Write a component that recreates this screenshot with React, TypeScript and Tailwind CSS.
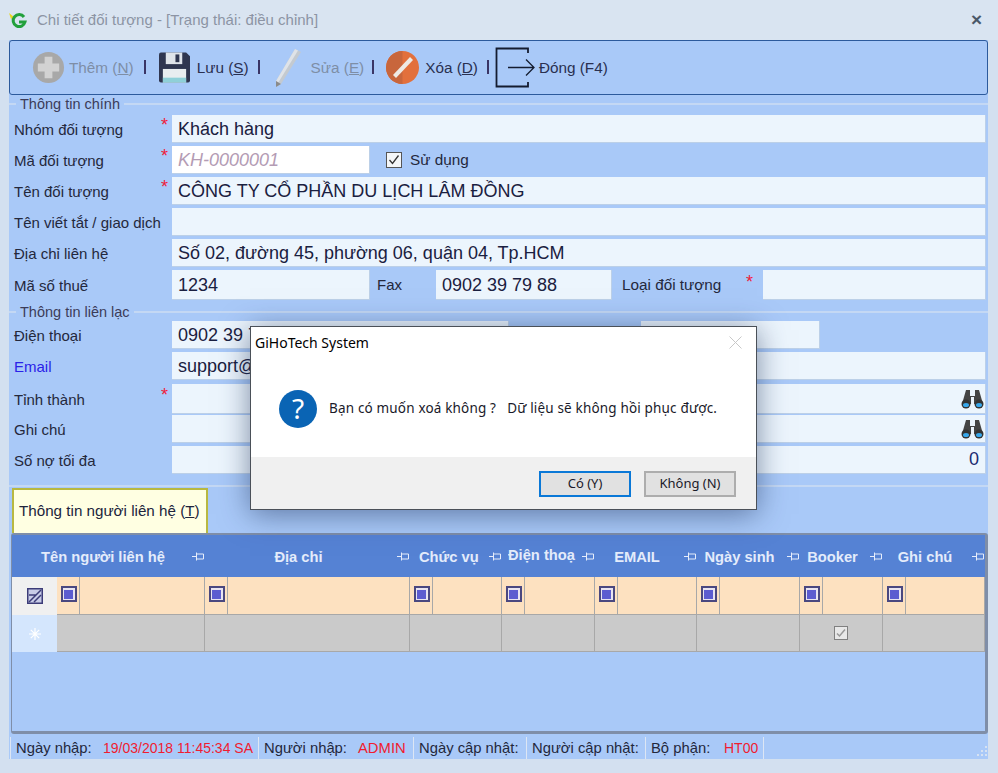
import React from "react";

const SANS = "font-['Liberation_Sans',Arial,sans-serif]";

function Star() {
  return <span className="text-[18px] leading-none text-[#f0203a] h-[14px] font-['Liberation_Sans',sans-serif]">*</span>;
}

function Label({ text, star, blue }: { text: string; star?: boolean; blue?: boolean }) {
  return (
    <div className="w-[163px] shrink-0 pl-[5px] pr-[4px] pt-[2px] flex justify-between items-center">
      <span className={`text-[15px] whitespace-nowrap ${blue ? "text-[#2a22e8]" : "text-[#24283c]"}`}>{text}</span>
      {star && <span className="-mt-[8px]"><Star /></span>}
    </div>
  );
}

function Input({ value, className = "", right, italic, white }: { value?: string; className?: string; right?: React.ReactNode; italic?: boolean; white?: boolean }) {
  return (
    <div className={`h-full flex items-center pl-[6px] pr-[1px] border-b border-r border-[#bcd0e8] ${white ? "bg-white" : "bg-[#ecf5fd]"} ${className}`}>
      <span className={`flex-1 pt-[1px] whitespace-nowrap overflow-hidden text-[18px] ${italic ? "italic text-[#b49cb4]" : "text-[#1a2040]"}`}>{value}</span>
      {right}
    </div>
  );
}

function Section({ title }: { title: string }) {
  return (
    <div className="h-[14px] flex items-center">
      <div className="w-[7px] h-[2px] bg-[#c4d8f4]" />
      <span className="px-[4px] text-[14.500px] leading-none text-[#3c3c58]">{title}</span>
      <div className="flex-1 h-[2px] bg-[#c4d8f4]" />
    </div>
  );
}

function Binoculars() {
  return (
    <svg width="23" height="22" viewBox="0 0 23 22" className="shrink-0">
      <path d="M5 2h4v6h5V2h4l4 14H13V9h-3v7H1z" fill="#444" />
      <circle cx="5" cy="16" r="4.500" fill="#333" />
      <circle cx="18" cy="16" r="4.500" fill="#333" />
      <ellipse cx="5" cy="17" rx="3" ry="2" fill="#38a8ec" />
      <ellipse cx="18" cy="17" rx="3" ry="2" fill="#38a8ec" />
    </svg>
  );
}

function Sep({ className }: { className: string }) {
  return <span className={`w-[2px] h-[14px] bg-[#3a3566] -mt-[1px] shrink-0 ${className}`} />;
}

function ToolButton({ icon, label, u, dim, gap }: { icon: React.ReactNode; label: string; u: string; dim?: boolean; gap: string }) {
  return (
    <div className="flex items-center">
      {icon}
      <span className={`text-[15.300px] pt-[1px] whitespace-nowrap ${gap} ${dim ? "text-[#7e8ea6]" : "text-[#2a3050]"}`}>
        {label} (<span className="underline">{u}</span>)
      </span>
    </div>
  );
}

const COLS = "grid grid-cols-[148px_205px_92px_93px_102px_103px_83px_102px]";

function Pin() {
  return (
    <svg width="12" height="9" viewBox="0 0 12 9" className="shrink-0">
      <path d="M0 4.500h4M4.500 0.500v8M4.500 2h7M4.500 7h7M11.500 2v5" stroke="#e6edfb" strokeWidth="1" fill="none" />
    </svg>
  );
}

function HeadCell({ text, className = "", pad }: { text: string; className?: string; pad?: string }) {
  return (
    <div className={`flex items-center h-full pr-[1px] overflow-hidden ${className}`}>
      <span className={`flex-1 pt-[2px] mr-[5px] whitespace-nowrap text-[14.700px] font-bold text-[#e4ecfb] ${pad ?? "text-center"}`}>{text}</span>
      <Pin />
    </div>
  );
}

function Filter() {
  return (
    <div className="h-full flex border-r border-b border-[#a8a8a8] bg-[#fde1c0]">
      <div className="w-[23px] shrink-0 border-r border-[#a8a8a8] flex items-center justify-center pl-[1px] pb-[3px]">
        <div className="w-[16px] h-[16px] border-2 border-[#4a4880] bg-[#e8e4f0] flex items-center justify-center">
          <div className="w-[9px] h-[9px] bg-[#5c5cd0]" />
        </div>
      </div>
    </div>
  );
}

function StatusSep() {
  return <span className="w-px h-[22px] bg-[#dde6f4] shrink-0" />;
}

const CELLS = [0, 1, 2, 3, 4, 5, 6, 7];
const HEADS = ["Địa chỉ", "Chức vụ", "Điện thoại", "EMAIL", "Ngày sinh", "Booker", "Ghi chú"];

export default function App() {
  return (
    <div className={`relative w-[998px] h-[773px] overflow-hidden bg-[#d3e0f0] ${SANS}`}>
      {/* title bar */}
      <div className="h-[40px] flex items-center pl-[8px] pr-[16px] bg-[#d9e4f1]">
        <svg width="20" height="20" viewBox="0 0 20 20">
          <path d="M1 3l5 4-3 2z" fill="#e8d820" />
          <path d="M16 7a6 6 0 1 0 1 5h-6" stroke="#22a03c" strokeWidth="3" fill="none" />
        </svg>
        <span className="ml-[9px] flex-1 text-[15px] text-[#8c94a4]">Chi tiết đối tượng - [Trạng thái: điều chỉnh]</span>
        <span className="text-[19px] font-bold text-[#4a5868]">×</span>
      </div>

      <div className="mx-[9px] w-[979px] h-[719px] bg-[#a9c9f8] flex flex-col">
        {/* toolbar */}
        <div className="h-[55px] shrink-0 border border-[#2c5a9c] rounded-[3px] flex items-center pl-[22px]">
          <ToolButton
            dim label="Thêm" u="N" gap="ml-[4px]"
            icon={
              <svg width="33" height="33" viewBox="0 0 34 34">
                <circle cx="17" cy="17" r="16" fill="#a8a8a8" />
                <path d="M13 6h8v7h7v8h-7v7h-8v-7H6v-8h7z" fill="#d2d2d2" />
              </svg>
            }
          />
          <Sep className="ml-[10px] mr-[13px]" />
          <ToolButton
            label="Lưu" u="S" gap="ml-[7px]"
            icon={
              <svg width="31" height="31" viewBox="0 0 32 31">
                <path d="M0 2a2 2 0 0 1 2-2h26l4 4v25a2 2 0 0 1-2 2H2a2 2 0 0 1-2-2z" fill="#2f3650" />
                <rect x="7" y="0" width="17" height="12" fill="#dfe4ea" />
                <rect x="17" y="2" width="4" height="8" fill="#2f3650" />
                <rect x="4" y="17" width="24" height="14" fill="#e8edf0" />
                <rect x="4" y="26" width="24" height="5" fill="#8fd0d8" />
              </svg>
            }
          />
          <Sep className="ml-[9px] mr-[13px]" />
          <ToolButton
            dim label="Sửa" u="E" gap="ml-[8px]"
            icon={
              <svg width="30" height="40" viewBox="0 0 30 40">
                <path d="M22 1l6 3L8 36l-5 3 0-6z" fill="#c4cad0" />
                <path d="M22 1l3 1.500L5 35l-2-2z" fill="#dfe3e8" />
                <path d="M3 33l5 3-5 3z" fill="#8a8a8a" />
              </svg>
            }
          />
          <Sep className="ml-[8px] mr-[12px]" />
          <ToolButton
            label="Xóa" u="D" gap="ml-[6px]"
            icon={
              <svg width="33" height="33" viewBox="0 0 33 33">
                <circle cx="16.500" cy="16.500" r="16.500" fill="#e2703c" />
                <path d="M16.500 0a16.500 16.500 0 0 0 0 33z" fill="#c8663c" />
                <path d="M7 24L24 6l3 3L10 27z" fill="#eeeae4" />
              </svg>
            }
          />
          <Sep className="ml-[9px] mr-[6px]" />
          <div className="flex items-center">
            <svg width="40" height="41" viewBox="0 0 40 41" className="shrink-0">
              <path d="M33 6V1.500H1.500v38H33V35" stroke="#141c30" strokeWidth="1.800" fill="none" />
              <path d="M13 20.500h26M31 12.500l8 8-8 8" stroke="#141c30" strokeWidth="1.300" fill="none" />
            </svg>
            <span className="ml-[4px] pt-[1px] text-[15.300px] text-[#2a3050] whitespace-nowrap">Đóng (F4)</span>
          </div>
        </div>

        {/* Main information */}
        <div className="mt-[2px]"><Section title="Thông tin chính" /></div>
        <div className="mt-[4px] flex flex-col gap-[3px] pr-[2px]">
          <div className="h-[28px] flex"><Label text="Nhóm đối tượng" star /><Input value="Khách hàng" className="flex-1" /></div>
          <div className="h-[28px] flex items-center">
            <Label text="Mã đối tượng" star />
            <Input value="KH-0000001" italic white className="w-[198px]" />
            <div className="ml-[16px] w-[16px] h-[16px] bg-[#f4f6f8] border border-[#555] flex items-center justify-center">
              <svg width="12" height="12" viewBox="0 0 12 12"><path d="M1.500 6l3 3.500 6-8" stroke="#333" strokeWidth="1.300" fill="none" /></svg>
            </div>
            <span className="ml-[8px] pt-[1px] text-[15.300px] text-[#24283c]">Sử dụng</span>
          </div>
          <div className="h-[28px] flex"><Label text="Tên đối tượng" star /><Input value="CÔNG TY CỔ PHẦN DU LỊCH LÂM ĐỒNG" className="flex-1" /></div>
          <div className="h-[28px] flex"><Label text="Tên viết tắt / giao dịch" /><Input className="flex-1" /></div>
          <div className="h-[28px] flex"><Label text="Địa chỉ liên hệ" /><Input value="Số 02, đường 45, phường 06, quận 04, Tp.HCM" className="flex-1" /></div>
          <div className="h-[30px] flex items-center">
            <Label text="Mã số thuế" />
            <Input value="1234" className="w-[198px]" />
            <span className="w-[66px] shrink-0 pl-[7px] pt-[1px] text-[15px] text-[#24283c]">Fax</span>
            <Input value="0902 39 79 88" className="w-[176px]" />
            <span className="w-[151px] shrink-0 pl-[10px] pt-[1px] flex justify-between pr-[10px] text-[15.300px] text-[#24283c]">Loại đối tượng <span className="-mt-[2px]"><Star /></span></span>
            <Input className="flex-1" />
          </div>
        </div>

        {/* Contact info */}
        <div className="mt-[5px]"><Section title="Thông tin liên lạc" /></div>
        <div className="mt-[2px] flex flex-col pr-[2px]">
          <div className="h-[28px] flex">
            <Label text="Điện thoại" />
            <Input value="0902 39 79 88" className="w-[337px]" />
            <div className="w-[132px] shrink-0" />
            <Input className="w-[179px]" />
          </div>
          <div className="h-[28px] mt-[3px] flex"><Label text="Email" blue /><Input value="support@gihotech.com" className="flex-1" /></div>
          <div className="h-[30px] mt-[4px] flex"><Label text="Tỉnh thành" star /><Input className="flex-1" right={<Binoculars />} /></div>
          <div className="h-[28px] mt-[1px] flex"><Label text="Ghi chú" /><Input className="flex-1" right={<Binoculars />} /></div>
          <div className="h-[28px] mt-[3px] flex">
            <Label text="Số nợ tối đa" />
            <Input className="flex-1" right={<span className="text-[18px] text-[#1a2a70] pr-[5px]">0</span>} />
          </div>
        </div>

        <div className="mt-[11px] h-[2px] bg-[#c4d8f4] shrink-0" />

        {/* Tabs */}
        <div className="ml-[3px] mt-[1px] w-[196px] h-[45px] shrink-0 bg-[#ffffe2] border-2 border-b-0 border-[#b8b840] flex items-center pl-[5px] text-[15.200px] text-[#20243c] whitespace-nowrap">
          Thông tin người liên hệ (<span className="underline">T</span>)
        </div>

        {/* Table panel */}
        <div className="ml-[2px] h-[201px] shrink-0 border-t-2 border-r-[3px] border-b-[3px] border-l border-[#7f8ea8] rounded-[3px] flex flex-col">
          <div className="h-[42px] shrink-0 bg-[#5582d4] relative">
            <div className={`h-full pl-[45px] ${COLS}`}>
              <div className="relative h-full">
                <div className="absolute right-0 top-0 h-full w-[193px]">
                  <HeadCell text="Tên người liên hệ" className="pl-[29px]" pad="text-left" />
                </div>
              </div>
              {HEADS.map((h, i) => (
                <HeadCell
                  key={h}
                  text={h === "Điện thoại" ? "Điện thoạ" : h}
                  className={h === "Điện thoại" ? "pl-[6px]" : i === 1 ? "pl-[9px]" : ""}
                  pad={h === "Điện thoại" ? "text-left overflow-hidden -mt-[3px]" : i === 1 ? "text-left" : "text-center"}
                />
              ))}
            </div>
          </div>
          <div className="h-[38px] shrink-0 flex">
            <div className="w-[45px] shrink-0 bg-[#f0f0f0] flex items-center justify-center">
              <svg width="16" height="16" viewBox="0 0 16 16">
                <rect x="0.750" y="0.750" width="14.500" height="14.500" fill="#c8cce8" stroke="#3c3c78" strokeWidth="1.500" />
                <path d="M2 14L14 2M7 14l7-7M2 7h7" stroke="#3c3c78" strokeWidth="1.500" fill="none" />
              </svg>
            </div>
            <div className={`flex-1 ${COLS}`}>{CELLS.map((c) => <Filter key={c} />)}</div>
          </div>
          <div className="h-[37px] shrink-0 flex">
            <div className="w-[45px] shrink-0 bg-[#d4e6fd] flex items-center justify-center text-white">
              <svg width="12" height="12" viewBox="0 0 12 12"><path d="M6 0v12M0 6h12M1.800 1.800l8.400 8.400M10.200 1.800l-8.400 8.400" stroke="#fff" strokeWidth="1.200" /></svg>
            </div>
            <div className={`flex-1 ${COLS}`}>
              {CELLS.map((c) => (
                <div key={c} className="h-full bg-[#cacaca] border-r border-b border-[#a8a8a8] flex items-center justify-center">
                  {c === 6 && (
                    <div className="w-[14px] h-[14px] border border-[#808080] bg-[#e8e8e8] flex items-center justify-center">
                      <svg width="10" height="10" viewBox="0 0 10 10"><path d="M1 5.500l2.500 2.500 5.500-6.500" stroke="#999" strokeWidth="1.500" fill="none" /></svg>
                    </div>
                  )}
                </div>
              ))}
            </div>
          </div>
        </div>

        {/* Status bar */}
        <div className="mt-[3px] h-[23px] flex items-center text-[14.800px] whitespace-nowrap text-[#24283c] pl-px relative">
          <StatusSep />
          <span className="w-[92px] pl-[5px]">Ngày nhập:</span>
          <span className="w-[155px] text-[14px] text-[#f01c30]">19/03/2018 11:45:34 SA</span>
          <StatusSep />
          <span className="w-[99px] pl-[5px]">Người nhập:</span>
          <span className="w-[55px] text-[#f01c30]">ADMIN</span>
          <StatusSep />
          <span className="w-[112px] pl-[5px]">Ngày cập nhật:</span>
          <StatusSep />
          <span className="w-[118px] pl-[5px]">Người cập nhật:</span>
          <StatusSep />
          <span className="w-[78px] pl-[5px]">Bộ phận:</span>
          <span className="w-[39px] text-[14px] text-[#f01c30]">HT00</span>
          <StatusSep />
          <svg width="13" height="13" viewBox="0 0 13 13" className="absolute right-0 top-[9px]">
            <g fill="#d6e2f2">
              <rect x="10" y="0" width="2" height="2" /><rect x="10" y="4" width="2" height="2" /><rect x="10" y="8" width="2" height="2" />
              <rect x="6" y="4" width="2" height="2" /><rect x="6" y="8" width="2" height="2" /><rect x="2" y="8" width="2" height="2" />
            </g>
          </svg>
        </div>
      </div>

      {/* Dialog */}
      <div className="absolute left-[250px] top-[326px] w-[507px] h-[184px] bg-white border border-[#4a5058] shadow-[0_4px_28px_rgba(30,50,90,0.55)] flex flex-col font-['Noto_Sans',sans-serif]">
        <div className="h-[30px] shrink-0 flex items-center pl-[4px] pr-[14px] pt-[1px] justify-between">
          <span className="text-[14px] text-black">GiHoTech System</span>
          <svg width="13" height="13" viewBox="0 0 13 13"><path d="M0.500 0.500l12 12M12.500 0.500l-12 12" stroke="#c8c8c8" strokeWidth="1" /></svg>
        </div>
        <div className="flex-1 flex items-center pl-[28px] pt-[3px]">
          <svg width="38" height="38" viewBox="0 0 38 38" className="shrink-0">
            <circle cx="19" cy="19" r="19" fill="#0a64b4" />
            <text x="19" y="29" textAnchor="middle" fontSize="28" fill="#fff" fontFamily="Noto Sans, sans-serif">?</text>
          </svg>
          <span className="ml-[12px] text-[13.500px] tracking-[0.170px] text-[#1a1a2a] whitespace-pre">Bạn có muốn xoá không ?   Dữ liệu sẽ không hồi phục được.</span>
        </div>
        <div className="h-[52px] shrink-0 bg-[#f0f0f0] flex items-start justify-end gap-[13px] pr-[20px] pt-[14px] text-[13px] text-[#1a1a2a]">
          <div className="w-[92px] h-[26px] bg-[#e1e1e1] border-2 border-[#0a78d7] flex items-center justify-center">Có (Y)</div>
          <div className="w-[92px] h-[26px] bg-[#e1e1e1] border-2 border-[#adadad] flex items-center justify-center">Không (N)</div>
        </div>
      </div>
    </div>
  );
}
